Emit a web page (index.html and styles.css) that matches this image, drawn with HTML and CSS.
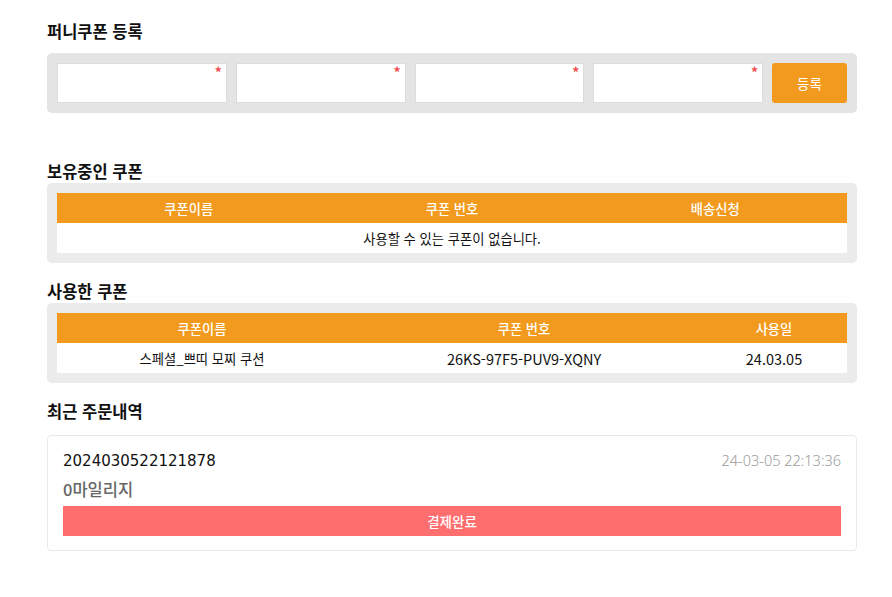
FILE: index.html
```html
<!DOCTYPE html>
<html lang="ko">
<head>
<meta charset="utf-8">
<link rel="stylesheet" href="styles.css">
</head>
<body>
<div class="page">
  <section class="sec sec-register">
    <h2 class="title">퍼니쿠폰 등록</h2>
    <div class="reg-box">
      <div class="field"><input type="text"><span class="req">*</span></div>
      <div class="field"><input type="text"><span class="req">*</span></div>
      <div class="field"><input type="text"><span class="req">*</span></div>
      <div class="field"><input type="text"><span class="req">*</span></div>
      <button class="btn-reg">등록</button>
    </div>
  </section>

  <section class="sec sec-owned">
    <h2 class="title tight">보유중인 쿠폰</h2>
    <div class="tbl-box">
      <table class="tbl thirds">
        <thead><tr><th>쿠폰이름</th><th>쿠폰 번호</th><th>배송신청</th></tr></thead>
        <tbody><tr><td colspan="3">사용할 수 있는 쿠폰이 없습니다.</td></tr></tbody>
      </table>
    </div>
  </section>

  <section class="sec sec-used">
    <h2 class="title tight">사용한 쿠폰</h2>
    <div class="tbl-box">
      <table class="tbl used">
        <colgroup><col class="c1"><col class="c2"><col class="c3"></colgroup>
        <thead><tr><th>쿠폰이름</th><th>쿠폰 번호</th><th>사용일</th></tr></thead>
        <tbody><tr><td>스페셜_쁘띠 모찌 쿠션</td><td class="code">26KS-97F5-PUV9-XQNY</td><td class="code">24.03.05</td></tr></tbody>
      </table>
    </div>
  </section>

  <section class="sec sec-orders">
    <h2 class="title">최근 주문내역</h2>
    <div class="order-card">
      <div class="order-top">
        <span class="order-no">2024030522121878</span>
        <span class="order-date">24-03-05 22:13:36</span>
      </div>
      <div class="order-mileage">0마일리지</div>
      <div class="order-status">결제완료</div>
    </div>
  </section>
</div>
</body>
</html>
```

FILE: styles.css
```css
* { box-sizing: border-box; }
html, body { margin: 0; padding: 0; background: #fff; }
body {
  font-family: "Noto Sans CJK KR", "Noto Sans", sans-serif;
  color: #111;
}
.page {
  width: 810px;
  margin-left: 47px;
  padding-top: 19px;
}
.title {
  margin: 0 0 10px 0;
  font-size: 16.5px;
  line-height: 24px;
  font-weight: 700;
  color: #111;
}
.title.tight { margin-bottom: 0; }

.sec-register { margin-bottom: 46px; }
.reg-box {
  background: #e4e4e4;
  border-radius: 5px;
  padding: 10px;
  display: flex;
  gap: 9px;
}
.field {
  position: relative;
  flex: 1;
  height: 40px;
}
.field input {
  width: 100%;
  height: 100%;
  border: 1px solid #dcdcdc;
  background: #fff;
  margin: 0;
  padding: 0 10px;
  outline: none;
}
.req {
  position: absolute;
  right: 5px;
  top: 1px;
  color: #f05050;
  font-size: 14px;
  line-height: 16px;
  font-weight: 700;
}
.btn-reg {
  width: 75px;
  height: 40px;
  border: 0;
  border-radius: 3px;
  background: #f29a1d;
  color: #fff;
  font-family: inherit;
  font-size: 13.5px;
  padding: 0;
}

.sec-owned, .sec-used { margin-bottom: 16px; }
.tbl-box {
  background: #ebebeb;
  border-radius: 5px;
  padding: 10px;
}
.tbl {
  width: 100%;
  border-collapse: collapse;
  table-layout: fixed;
  background: #fff;
}
.tbl th {
  background: #f29a1d;
  color: #fff;
  font-size: 13.3px;
  font-weight: 500;
  height: 30px;
  padding: 0;
  text-align: center;
}
.tbl td {
  height: 30px;
  padding: 0;
  font-size: 13.3px;
  text-align: center;
  color: #111;
}
.tbl td.code { font-size: 14.5px; }
.used .c1 { width: 290px; }
.used .c2 { width: 354px; }
.used .c3 { width: 146px; }

.sec-orders .title { margin-bottom: 12px; }
.order-card {
  border: 1px solid #e8e8e8;
  border-radius: 4px;
  padding: 11px 15px 14px 15px;
}
.order-top {
  display: flex;
  justify-content: space-between;
  align-items: baseline;
  height: 24px;
  line-height: 26px;
}
.order-no {
  font-family: "DejaVu Sans", sans-serif;
  font-size: 15px;
  color: #111;
}
.order-date {
  font-family: "Noto Sans", sans-serif;
  font-size: 14.5px;
  font-weight: 300;
  color: #9a9a9a;
}
.order-mileage {
  margin-top: 5px;
  font-size: 16.5px;
  line-height: 26px;
  font-weight: 500;
  color: #666;
}
.order-status {
  margin-top: 4px;
  height: 30px;
  line-height: 30px;
  background: #ff6e6e;
  color: #fff;
  text-align: center;
  font-size: 13.5px;
  font-weight: 500;
}
```
